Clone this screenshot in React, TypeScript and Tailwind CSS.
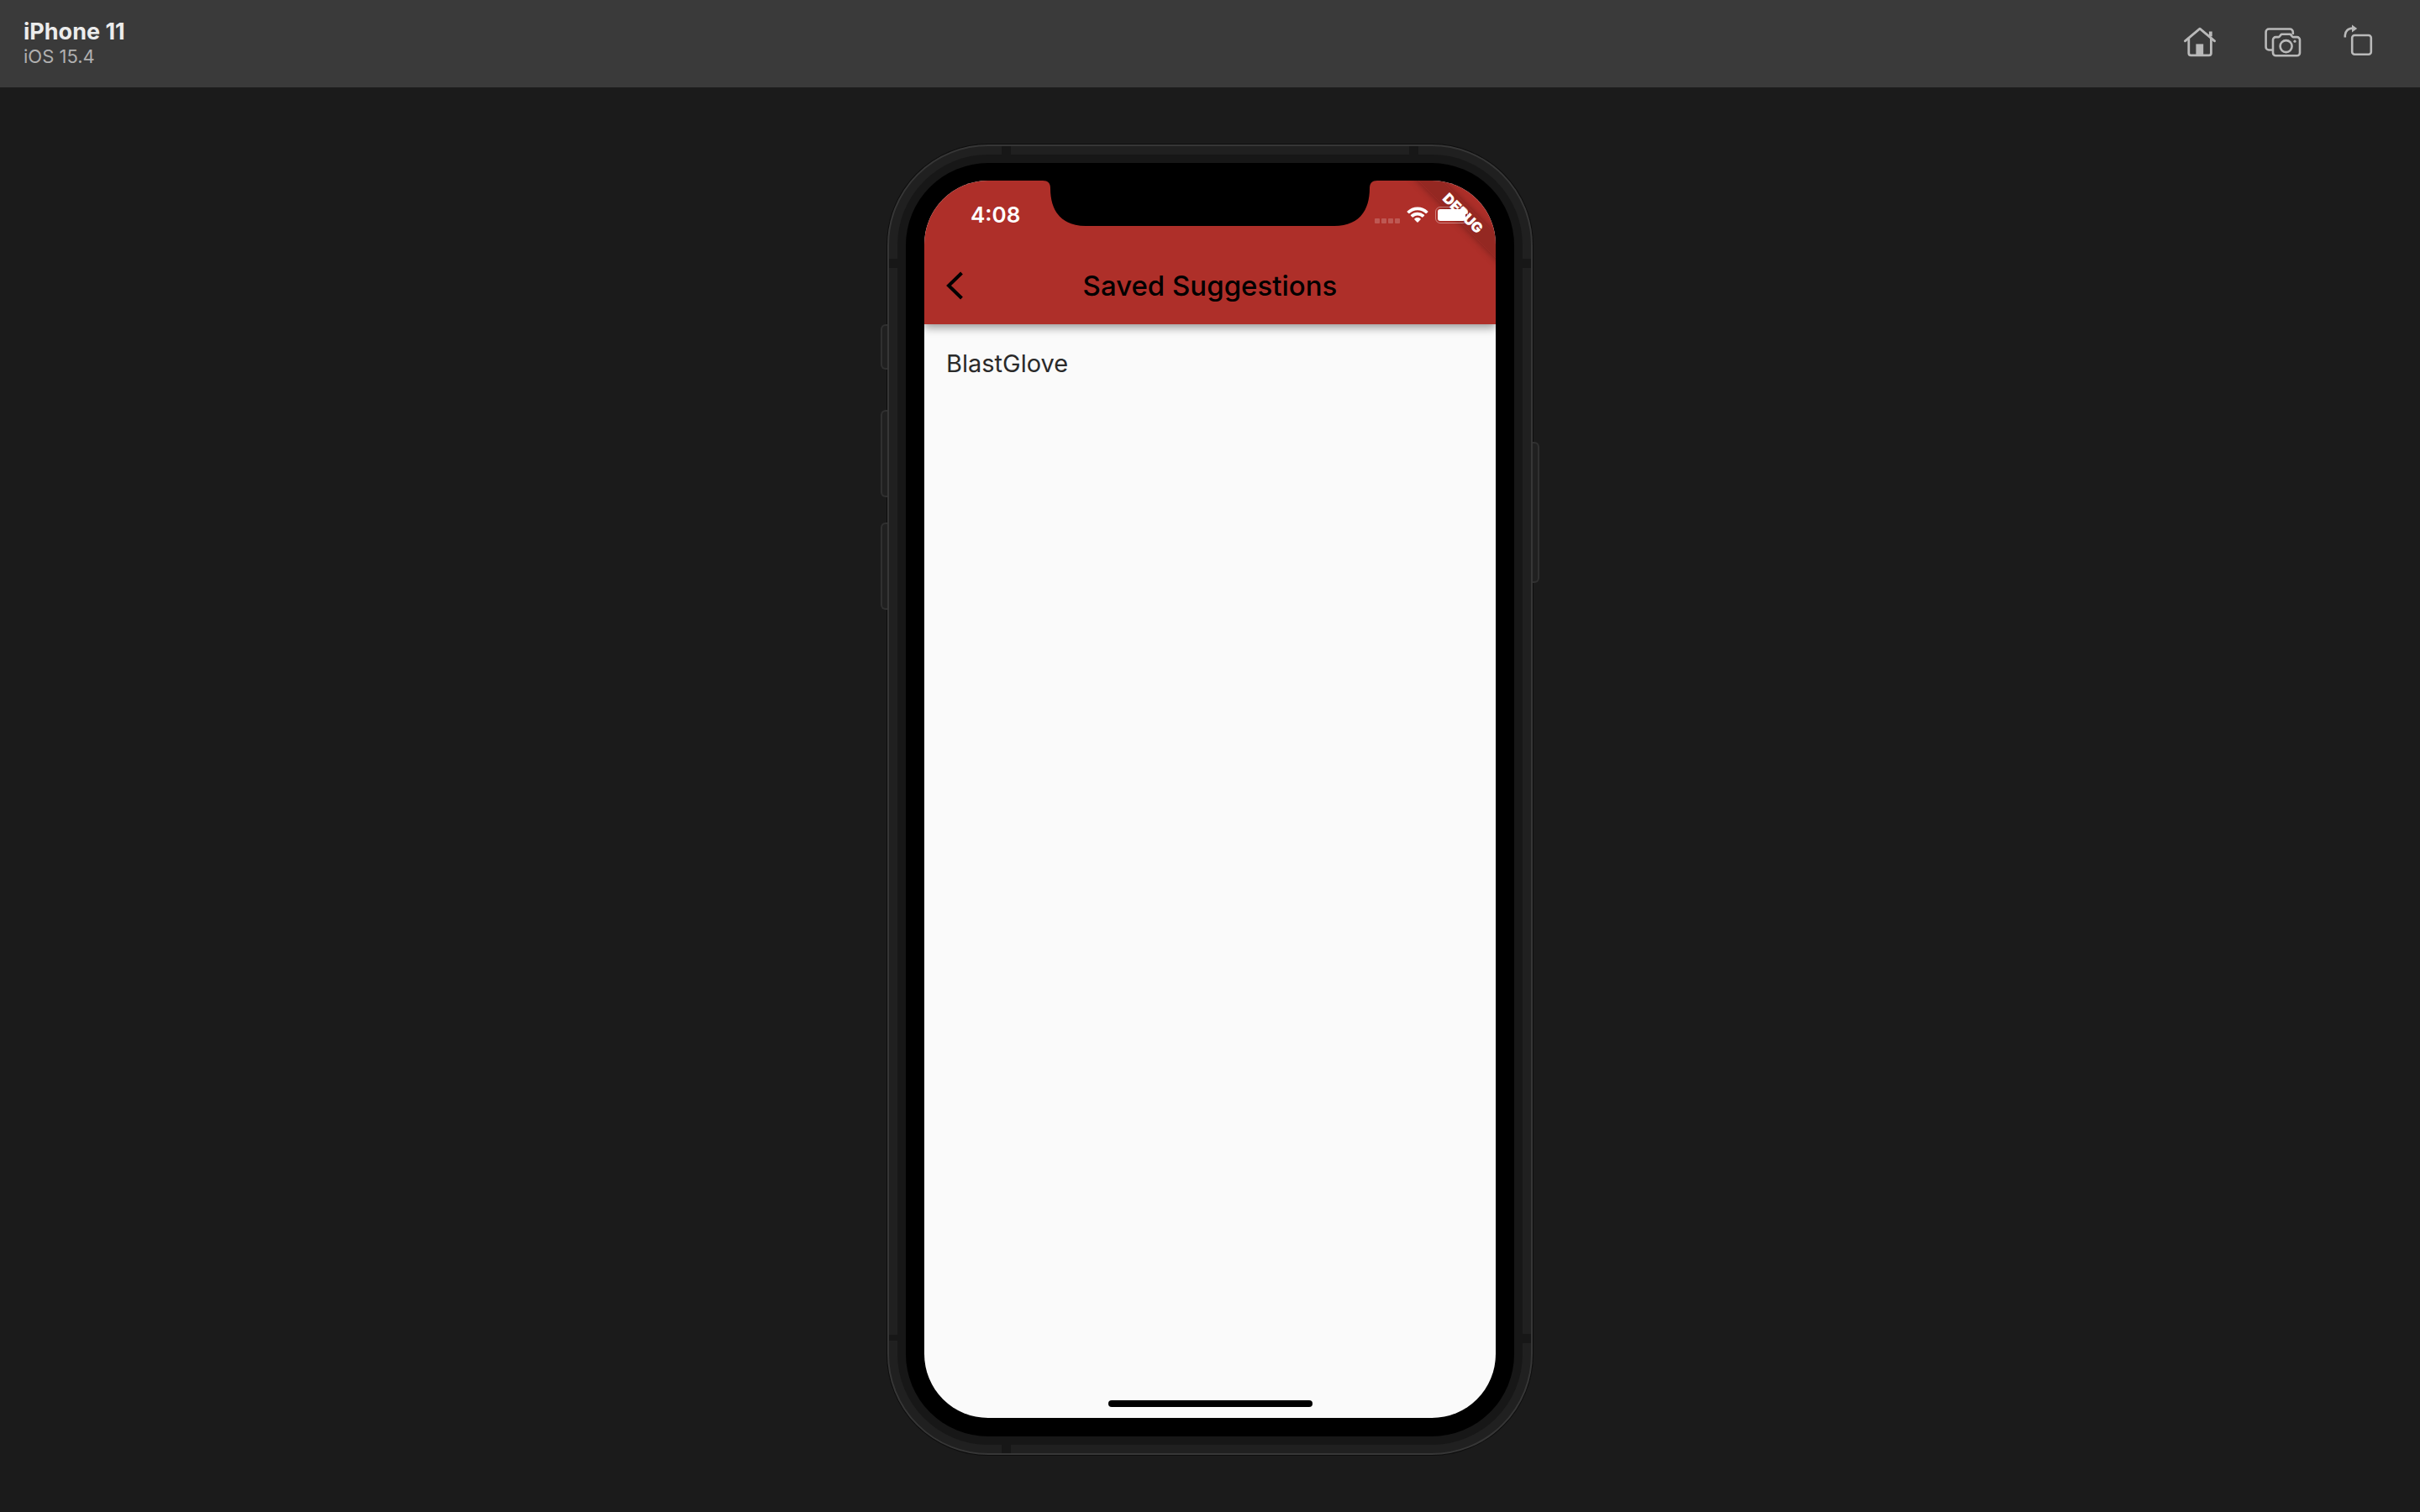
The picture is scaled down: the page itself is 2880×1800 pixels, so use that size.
import type { ReactNode } from "react";

function ToolButton({ label, className, children }: { label: string; className: string; children: ReactNode }) {
  return (
    <button type="button" aria-label={label} className={`flex shrink-0 items-center justify-center text-[#b9b9b9] ${className}`}>
      {children}
    </button>
  );
}

function Toolbar() {
  return (
    <header className="flex h-[104px] shrink-0 items-center justify-between bg-[#3a3a3a] pl-7 pr-[52px]">
      <div className="flex flex-col">
        <h1 className="text-[27px] leading-[30px] font-bold text-[#ececec]">iPhone 11</h1>
        <p className="text-[22px] leading-[28px] text-[#b0b0b0]">iOS 15.4</p>
      </div>
      <div className="flex items-center pb-1">
        <ToolButton label="Home" className="mr-13">
          <svg width="44" height="44" viewBox="0 0 44 44" fill="none" stroke="currentColor" strokeWidth="2.8" strokeLinecap="round" strokeLinejoin="round">
            <path d="M4.4 20.8 22 6.2l17.6 14.6" />
            <path d="M8.8 18v17.2a2.6 2.6 0 0 0 2.6 2.6h21.4a2.6 2.6 0 0 0 2.6-2.6V18" />
            <path d="M34.8 15.400V9.500" strokeWidth="3.8" strokeLinecap="butt" />
            <path d="M17.4 24.400h8.8v13.200h-8.8z" fill="currentColor" stroke="none" />
          </svg>
        </ToolButton>
        <ToolButton label="Screenshot" className="mr-11">
          <svg width="48" height="44" viewBox="0 0 48 44" fill="none" stroke="currentColor" strokeWidth="2.6" strokeLinejoin="round">
            <path d="M12 31.500H8.2a3.600 3.600 0 0 1-3.600-3.600V10.100a3.600 3.600 0 0 1 3.600-3.600h25a3.600 3.600 0 0 1 3.600 3.600v3" />
            <path d="M16.400 16.100h3.400c1.200 0 1.900-2.700 3.600-3.400h10c1.700.7 2.400 3.400 3.600 3.400h4.600a3.400 3.400 0 0 1 3.400 3.400v15.400a3.400 3.400 0 0 1-3.400 3.400H16.400a3.400 3.400 0 0 1-3.400-3.400V19.500a3.400 3.400 0 0 1 3.400-3.400z" />
            <circle cx="28.600" cy="27.100" r="7" />
            <circle cx="39" cy="21.200" r="1.600" fill="currentColor" stroke="none" />
          </svg>
        </ToolButton>
        <ToolButton label="Rotate" className="">
          <svg width="44" height="44" viewBox="0 0 44 44" fill="none" stroke="currentColor" strokeWidth="2.600">
            <path d="M6.800 16.600V14a8.600 8.600 0 0 1 8.600-8.400" />
            <path d="M15 1.400v9l6.200-4.500z" fill="currentColor" stroke="none" />
            <rect x="15.200" y="14" width="22.600" height="22.800" rx="3" />
          </svg>
        </ToolButton>
      </div>
    </header>
  );
}

function StatusBar() {
  return (
    <div className="relative flex h-[82px] items-center justify-between pl-[55px] pr-[30px] text-white">
      <span className="text-[26px] leading-[30px] font-semibold">4:08</span>
      <div className="flex items-center">
        <div className="mt-[13px] mr-2 flex gap-[2px]">
          <i className="size-[6px] rounded-[1px] bg-white/20" />
          <i className="size-[6px] rounded-[1px] bg-white/20" />
          <i className="size-[6px] rounded-[1px] bg-white/20" />
          <i className="size-[6px] rounded-[1px] bg-white/20" />
        </div>
        <svg className="mr-2" width="26" height="20" viewBox="0 0 26 20" fill="currentColor">
          <path d="M13 .4C8.200.4 3.900 2.300.7 5.400a.7.7 0 0 0 0 1l1.700 1.700c.3.300.7.300 1 0A13.800 13.800 0 0 1 13 4.300c3.700 0 7.100 1.400 9.600 3.800.3.300.7.300 1 0l1.700-1.700a.7.7 0 0 0 0-1A17.600 17.600 0 0 0 13 .4z" />
          <path d="M13 6.700c-3.100 0-5.800 1.200-7.900 3.100a.7.7 0 0 0 0 1.100l1.700 1.700c.3.300.7.300 1 0A7.700 7.700 0 0 1 13 10.600c2 0 3.800.8 5.200 2 .3.300.7.300 1 0l1.700-1.700a.7.7 0 0 0 0-1.100A11.600 11.600 0 0 0 13 6.700z" />
          <path d="M13 13c-1.400 0-2.600.5-3.500 1.300a.7.7 0 0 0 0 1.100l3 3.100c.3.300.7.300 1 0l3-3.100a.7.7 0 0 0 0-1.100A5.200 5.200 0 0 0 13 13z" />
        </svg>
        <div className="h-5 w-[39px] rounded-[6px] border border-white/40 p-[2px]">
          <div className="h-full rounded-[3px] bg-white" />
        </div>
        <div className="ml-px h-[6px] w-[2px] rounded-r-full bg-white/40" />
      </div>
    </div>
  );
}

function DebugBanner() {
  return (
    <div className="pointer-events-none absolute -top-[10px] -right-[54px] flex h-5 w-[220px] translate-x-[17px] translate-y-[39px] rotate-45 items-center justify-center bg-black/15 text-[17px] leading-5 font-black text-white shadow-[0_0_10px_rgba(0,0,0,0.35)]">
      DEBUG
    </div>
  );
}

function Screen() {
  return (
    <div className="relative flex flex-1 flex-col overflow-hidden rounded-[76px] bg-[#fafafa]">
      <div className="relative h-[171px] bg-[#ae2f29] shadow-[0_4px_10px_rgba(0,0,0,0.4)]">
        <DebugBanner />
        <StatusBar />
        <div className="grid h-[86px] grid-cols-[80px_1fr_80px] items-center">
          <button type="button" aria-label="Back" className="flex h-full items-center pl-6 text-black">
            <svg width="24" height="34" viewBox="0 0 24 34" fill="none" stroke="currentColor" strokeWidth="4">
              <path d="M20.500 2 5 17l15.500 15" />
            </svg>
          </button>
          <h2 className="text-center text-[33px] leading-10 font-medium whitespace-nowrap text-black">Saved Suggestions</h2>
        </div>
        <svg className="absolute top-0 left-1/2 -translate-x-1/2" width="400" height="54" viewBox="0 0 400 54" fill="#000">
          <path d="M0 0h1C7 0 10 3 10 9c0 28 14 45 42 45h296c28 0 42-17 42-45 0-6 3-9 9-9h1z" />
        </svg>
      </div>
      <ul className="flex flex-1 flex-col">
        <li className="px-[26px] pt-[27px] text-[29px] leading-10 text-[#2a2a2a]">BlastGlove</li>
      </ul>
      <div className="mx-auto mb-[13px] h-[8px] w-[243px] rounded-full bg-black" />
    </div>
  );
}

function Phone() {
  return (
    <div className="relative flex w-full max-w-[768px] flex-col rounded-[120px] border-2 border-[#363636] bg-[#202020] p-[10px] shadow-[0_0_0_1px_#0e0e0e]">
      <i className="absolute top-[212px] -left-[10px] h-[54px] w-2 rounded-l-[6px] border-2 border-r-0 border-[#303030] bg-[#202020]" />
      <i className="absolute top-[314px] -left-[10px] h-[104px] w-2 rounded-l-[6px] border-2 border-r-0 border-[#303030] bg-[#202020]" />
      <i className="absolute top-[448px] -left-[10px] h-[104px] w-2 rounded-l-[6px] border-2 border-r-0 border-[#303030] bg-[#202020]" />
      <i className="absolute top-[352px] -right-[10px] h-[168px] w-2 rounded-r-[6px] border-2 border-l-0 border-[#303030] bg-[#202020]" />
      <i className="absolute top-0 left-[134px] h-[10px] w-[11px] bg-[#171717]" />
      <i className="absolute top-0 right-[134px] h-[10px] w-[11px] bg-[#171717]" />
      <i className="absolute top-[134px] left-0 h-[11px] w-[10px] bg-[#171717]" />
      <i className="absolute top-[134px] right-0 h-[11px] w-[10px] bg-[#171717]" />
      <i className="absolute bottom-[134px] left-0 h-[7px] w-[10px] bg-[#171717]" />
      <i className="absolute right-0 bottom-[131px] h-[11px] w-[10px] bg-[#171717]" />
      <i className="absolute bottom-0 left-[134px] h-[10px] w-[11px] bg-[#171717]" />
      <div className="flex flex-1 flex-col rounded-[108px] bg-[#171717] p-[10px]">
        <div className="flex flex-1 flex-col rounded-[98px] bg-black px-[22px] pt-[21px] pb-[22px]">
          <Screen />
        </div>
      </div>
    </div>
  );
}

export default function App() {
  return (
    <div className="flex min-h-screen flex-col bg-[#1b1b1b] font-['Inter',sans-serif]">
      <Toolbar />
      <main className="flex flex-1 justify-center py-[68px]">
        <Phone />
      </main>
    </div>
  );
}
